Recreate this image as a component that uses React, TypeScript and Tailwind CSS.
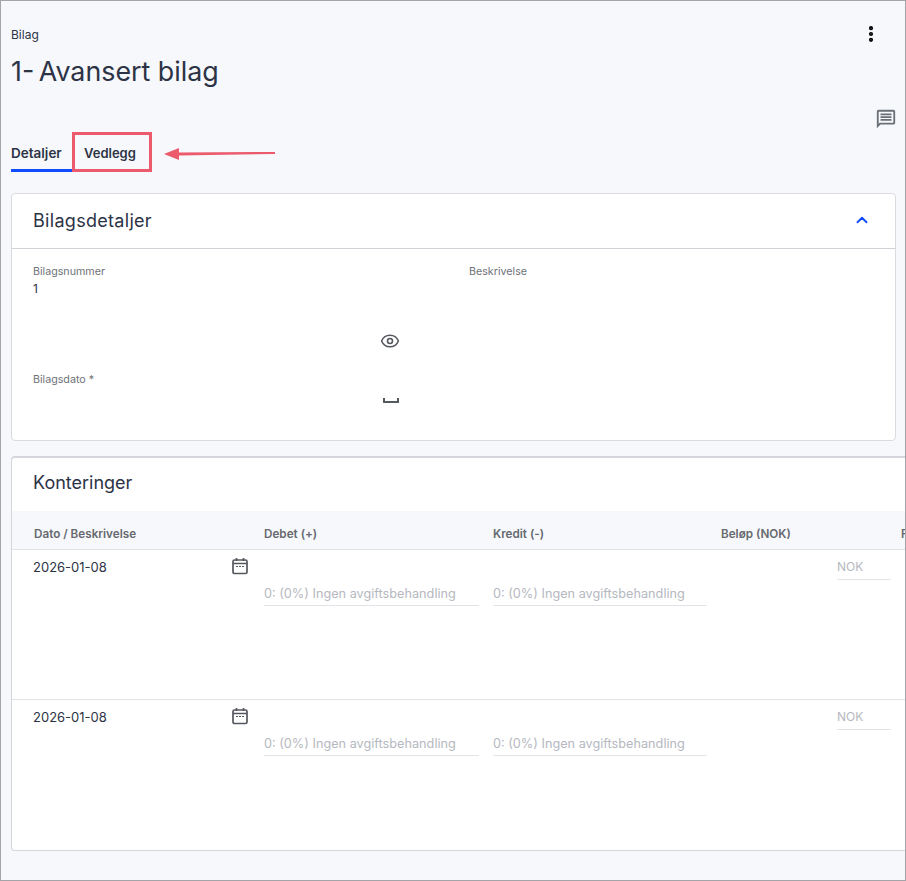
import { ChevronUp, Eye, MoreVertical } from "lucide-react";

const font = { fontFamily: "Inter, 'Noto Sans', sans-serif" };

function CommentIcon() {
  return (
    <svg width="22" height="22" viewBox="0 0 24 24" fill="#6b6f76">
      <path d="M20 2H4c-1.1 0-2 .9-2 2v18l4-4h14c1.1 0 2-.9 2-2V4c0-1.1-.9-2-2-2zm0 14H5.2L4 17.2V4h16v12zM6 12h12v2H6zm0-3h12v2H6zm0-3h12v2H6z" />
    </svg>
  );
}

function CalendarIcon() {
  return (
    <svg width="18" height="18" viewBox="0 0 18 18" fill="none" stroke="#55585e" strokeWidth="1.7">
      <rect x="2" y="3" width="14" height="13.5" rx="1.5" />
      <path d="M2 6.5h14M5.5 1v3M12.5 1v3" />
      <path d="M5 9.5h2M8 9.5h2M11 9.5h2" strokeWidth="1.2" />
    </svg>
  );
}

function Row({ height }: { height: string }) {
  return (
    <div className={`flex border-b border-[#e2e3e8] ${height}`}>
      <div className="flex w-[252px] shrink-0 items-start justify-between pl-[21px] pr-[15px] pt-[8px]">
        <span className="text-[13px] leading-[18px] text-[#2c3345]">2026-01-08</span>
        <span className="-mt-[1px]"><CalendarIcon /></span>
      </div>
      <div className="w-[215px] shrink-0 pt-[34px]">
        <div className="border-b border-[#e2e3e8] pb-[2px] pt-[1px] text-[12.7px] leading-[18px] text-[#b5b8c0] whitespace-nowrap">0: (0%) Ingen avgiftsbehandling</div>
      </div>
      <div className="ml-[14px] w-[214px] shrink-0 pt-[34px]">
        <div className="border-b border-[#e2e3e8] pb-[2px] pt-[1px] text-[12.7px] leading-[18px] text-[#b5b8c0] whitespace-nowrap">0: (0%) Ingen avgiftsbehandling</div>
      </div>
      <div className="ml-[130px] w-[54px] shrink-0 pt-[9px]">
        <div className="border-b border-[#e2e3e8] pb-[4px] text-[12px] leading-[16px] text-[#b5b8c0]">NOK</div>
      </div>
    </div>
  );
}

export default function App() {
  return (
    <div style={font} className="relative h-[881px] w-[906px] overflow-hidden border border-[#a3a4a8] bg-[#f6f8fc] pl-[10px] text-[#2c3345]">
      <div className="flex items-start justify-between pt-[26px] pr-[24px]">
        <div className="text-[12px] leading-[16px]">Bilag</div>
        <MoreVertical size={20} strokeWidth={3} className="-mt-[3px] text-black" />
      </div>
      <h1 className="mt-[9px] text-[26.8px] font-normal leading-[36px] text-[#2c3345]"><span className="mr-[-3px]">1-</span> Avansert bilag</h1>

      <div className="mt-[19px] flex justify-end pr-[8px]">
        <CommentIcon />
      </div>

      <div className="relative mt-[13px] flex gap-[22px] text-[13px] font-semibold leading-[18px] text-[#2c3345]">
        <div className="w-[66px] border-b-[3px] border-[#0f4bff] pb-[7px] pt-[1px]"><span className="-mr-[10px] text-[13.5px]">Detaljer</span></div>
        <div className="-ml-[15px] pt-[1px]">Vedlegg</div>
        <div className="absolute left-[61px] -top-[11px] h-[40px] w-[80px] border-[3px] border-[#eb5b6c]" />
        <svg className="absolute left-[151px] top-[3px]" width="115" height="16" viewBox="0 0 115 16">
          <path d="M2 8L17 2V6.5L113 6V8L17 9.5V14Z" fill="#eb5b6c" />
        </svg>
      </div>

      <div className="mt-[21px] mr-[9px] h-[248px] rounded-[4px] border border-[#d9dbe0] bg-white">
        <div className="flex h-[55px] items-center justify-between border-b border-[#d0d2d8] pb-[2px] pl-[21px] pr-[24px]">
          <h2 className="text-[18px] font-normal tracking-[0.3px] text-[#2c3345]">Bilagsdetaljer</h2>
          <ChevronUp size={18} strokeWidth={2.5} className="text-[#0f4bff]" />
        </div>
        <div className="flex pl-[21px] pt-[16px]">
          <div className="w-[436px]">
            <div className="text-[10.7px] leading-[14px] text-[#6f7278]">Bilagsnummer</div>
            <div className="mt-[1px] text-[12px] leading-[18px]">1</div>
            <div className="mt-[33px] flex justify-end pr-[69px]">
              <Eye size={20} strokeWidth={1.9} className="text-[#55585e]" />
            </div>
            <div className="mt-[22px] text-[10.7px] leading-[14px] text-[#6f7278]">Bilagsdato *</div>
            <div className="mt-[11px] flex justify-end pr-[70px]">
              <div className="h-[5px] w-[16px] rounded-b-[1px] border-x-2 border-b-2 border-[#55585e]" />
            </div>
          </div>
          <div className="text-[10.7px] leading-[14px] text-[#6f7278]">Beskrivelse</div>
        </div>
      </div>

      <div className="mt-[15px] -mr-[20px] h-[395px] rounded-[4px] border border-[#d4d6db] border-t-2 bg-white">
        <div className="flex h-[53px] items-center pb-[4px] pl-[21px]">
          <h2 className="text-[18px] font-normal text-[#2c3345]">Konteringer</h2>
        </div>
        <div className="flex h-[39px] items-center border-b border-[#e2e3e8] bg-[#f6f8fc] pt-[10px] text-[11.7px] font-semibold text-[#66696f]">
          <div className="w-[252px] shrink-0 pl-[22px]">Dato / Beskrivelse</div>
          <div className="w-[229px] shrink-0">Debet (+)</div>
          <div className="w-[228px] shrink-0">Kredit (-)</div>
          <div className="w-[180px] shrink-0">Beløp (NOK)</div>
          <div className="shrink-0">Rate</div>
        </div>
        <Row height="h-[150px]" />
        <div className="[&>div]:border-b-0">
          <Row height="h-[150px]" />
        </div>
      </div>
    </div>
  );
}
